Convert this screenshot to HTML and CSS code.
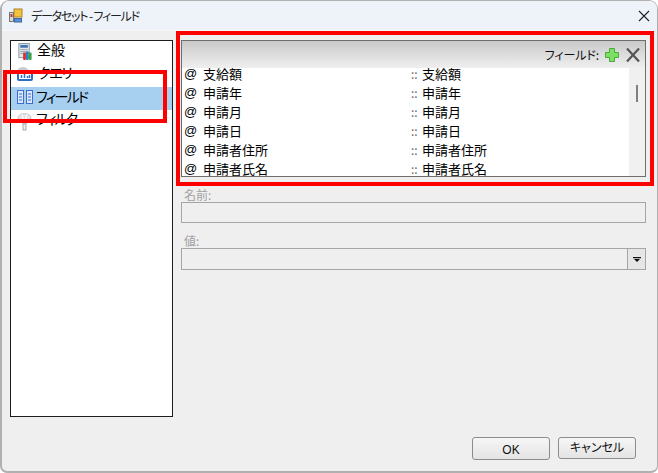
FILE: index.html
```html
<!DOCTYPE html>
<html lang="ja">
<head>
<meta charset="utf-8">
<title>データセット - フィールド</title>
<link rel="stylesheet" href="styles.css">
</head>
<body>
<div class="window">
  <header class="titlebar">
    <svg class="app-icon" width="16" height="16" viewBox="0 0 16 16">
      <rect x="6" y="1" width="8" height="8" fill="#f5c33b" stroke="#a9842a"/>
      <rect x="1.5" y="4.5" width="4" height="9" fill="#d9d9d9" stroke="#777"/>
      <rect x="2.5" y="6" width="2" height="3" fill="#c8362d"/>
      <rect x="6.5" y="10.5" width="7" height="3.500" fill="#5b8fd6" stroke="#3c66a8"/>
    </svg>
    <span class="title">データセット - フィールド</span>
    <svg class="close" width="12" height="12" viewBox="0 0 12 12"><path d="M1 1l10 10M11 1L1 11" stroke="#222" stroke-width="1.100" fill="none"/></svg>
  </header>
  <div class="content">
    <div class="main">
      <nav class="nav">
        <div class="nav-item nav-general">
          <svg width="16" height="17" viewBox="0 0 16 18">
            <rect x="1.500" y="0.500" width="11" height="15" fill="#e4e7ea" stroke="#8b97a3"/>
            <rect x="3" y="2" width="8" height="3" fill="#3f74b5"/>
            <path d="M3 7h8M3 9h8M3 11h8" stroke="#9aa5b0"/>
            <rect x="6" y="10" width="3" height="8" rx="1" fill="#d8352b"/>
            <rect x="9" y="9" width="3" height="9" rx="1" fill="#2f7fd0"/>
            <rect x="12" y="10" width="3" height="8" rx="1" fill="#3ea53a"/>
          </svg>
          <span>全般</span>
        </div>
        <div class="nav-item nav-query">
          <svg width="16" height="14" viewBox="0 0 16 14">
            <ellipse cx="6" cy="3" rx="5" ry="3" fill="#c9ccd0"/>
            <rect x="1" y="5" width="14" height="8" rx="1" fill="#fff" stroke="#2d6fc4" stroke-width="2"/>
            <path d="M4.500 11V8M7.500 11V7M10.500 11V9M12.500 11V8" stroke="#2d6fc4" stroke-width="1.500"/>
          </svg>
          <span>クエリ</span>
        </div>
        <div class="nav-item nav-selected">
          <svg width="16" height="14" viewBox="0 0 16 14">
            <rect x="0.500" y="0.500" width="6" height="13" fill="#dbe8fa" stroke="#3c6fd0"/>
            <rect x="9.500" y="0.500" width="6" height="13" fill="#dbe8fa" stroke="#3c6fd0"/>
            <path d="M2 4h3M2 7h3M2 10h3M11 4h3M11 7h3M11 10h3" stroke="#3c6fd0"/>
          </svg>
          <span>フィールド</span>
        </div>
        <div class="nav-item nav-filter">
          <svg width="15" height="18" viewBox="0 0 15 18">
            <path d="M1 5a6.500 4.500 0 0 1 13 0c0 3-4 4-5 6H6C5 9 1 8 1 5z" fill="#e3e3e3" stroke="#c4c4c4"/>
            <path d="M5 1l2 8M10 1L8 9" stroke="#fff"/>
            <rect x="6" y="11" width="3" height="6" fill="#eee" stroke="#aaa"/>
          </svg>
          <span>フィルタ</span>
        </div>
      </nav>
      <section class="side">
        <div class="fields">
          <div class="fields-head">
            <span>フィールド:</span>
            <svg class="add" width="14" height="14" viewBox="0 0 14 14"><path d="M4.500 0.500h5v4h4v5h-4v4h-5v-4h-4v-5h4z" fill="#7be05f" stroke="#4aa83d"/></svg>
            <svg class="del" width="14" height="14" viewBox="0 0 14 14"><path d="M1 0.500l12 13M13 0.500L1 13.500" stroke="#555" stroke-width="2.200" fill="none"/></svg>
          </div>
          <div class="fields-body">
            <ul class="rows">
              <li class="row"><b>@</b><span class="name">支給額</span><i>::</i><span>支給額</span></li>
              <li class="row"><b>@</b><span class="name">申請年</span><i>::</i><span>申請年</span></li>
              <li class="row"><b>@</b><span class="name">申請月</span><i>::</i><span>申請月</span></li>
              <li class="row"><b>@</b><span class="name">申請日</span><i>::</i><span>申請日</span></li>
              <li class="row"><b>@</b><span class="name">申請者住所</span><i>::</i><span>申請者住所</span></li>
              <li class="row"><b>@</b><span class="name">申請者氏名</span><i>::</i><span>申請者氏名</span></li>
            </ul>
            <div class="scrollbar"><div class="thumb"></div></div>
          </div>
        </div>
        <label class="label label-name">名前:</label>
        <div class="input"></div>
        <label class="label label-value">値:</label>
        <div class="input combo">
          <div class="combo-btn"><svg width="8" height="5" viewBox="0 0 8 5"><path d="M0 0h8v1.200H0zM1 2h6L4 5z" fill="#111"/></svg></div>
        </div>
      </section>
    </div>
    <footer class="footer">
      <button class="btn btn-ok">OK</button>
      <button class="btn btn-cancel">キャンセル</button>
    </footer>
  </div>
  <div class="mark mark-left"></div>
  <div class="mark mark-right"></div>
</div>
</body>
</html>
```
FILE: styles.css
```css
* { box-sizing: border-box; }
html, body { margin: 0; padding: 0; background: #fff; }
body {
  width: 658px;
  height: 473px;
  overflow: hidden;
  font-family: "Noto Sans CJK JP", "Liberation Sans", sans-serif;
  color: #000;
}
.window {
  position: relative;
  width: 658px;
  height: 473px;
  display: flex;
  flex-direction: column;
  background: #efefef;
  border: 1px solid #b0b0b0;
  border-left-width: 2px;
  border-bottom-width: 2px;
  border-radius: 9px 9px 7px 7px;
  overflow: hidden;
}
.titlebar {
  height: 30px;
  flex: none;
  display: flex;
  align-items: center;
  padding: 0 7px 0 6px;
  background: #eef2f9;
  border-bottom: 1px solid #f7f8fb;
}
.app-icon { flex: none; }
.title {
  margin-left: 7px;
  font-size: 12px;
  font-feature-settings: "palt";
  letter-spacing: -1.2px;
  color: #222;
  flex: 1;
}
.close { flex: none; }
.content {
  flex: 1;
  display: flex;
  flex-direction: column;
  padding: 9px 0 0 8px;
}
.main { display: flex; gap: 8px; }
.nav {
  width: 163px;
  height: 377px;
  flex: none;
  background: #fff;
  border: 1px solid #1c1c1c;
}
.nav-item {
  height: 23px;
  display: flex;
  align-items: flex-start;
  padding-left: 6px;
  font-size: 14px;
  line-height: 14px;
  font-feature-settings: "palt";
}
.nav-general { padding-top: 2px; }
.nav-general span { margin: -1px 0 0 4px; }
.nav-query { padding-top: 3px; }
.nav-query span { margin: -2px 0 0 5px; letter-spacing: -1.4px; }
.nav-selected { background: #a6cff0; padding-top: 3px; }
.nav-selected span { margin: -1px 0 0 3px; letter-spacing: -1.8px; }
.nav-filter { padding-top: 3px; }
.nav-filter span { margin: -2px 0 0 4px; letter-spacing: -1.8px; }
.side { width: 465px; flex: none; display: flex; flex-direction: column; }
.fields {
  height: 137px;
  border: 1px solid #6e6e6e;
  display: flex;
  flex-direction: column;
  background: #fff;
}
.fields-head {
  height: 27px;
  flex: none;
  display: flex;
  align-items: center;
  justify-content: flex-end;
  padding: 0 5px 0 0;
  background: linear-gradient(#c9c9c9, #efefef);
  font-size: 12px;
  font-feature-settings: "palt";
  letter-spacing: -0.1px;
  color: #111;
}
.fields-head span { margin-right: 6px; }
.del { margin-left: 7px; }
.fields-body { flex: 1; display: flex; overflow: hidden; min-height: 0; }
.rows { flex: 1; list-style: none; margin: -4px 0 0; padding: 0; overflow: hidden; }
.row {
  height: 19px;
  display: flex;
  align-items: center;
  font-size: 13px;
  line-height: 1;
}
.row b {
  width: 21px;
  padding-left: 2px;
  font-weight: normal;
  font-family: "Liberation Sans", sans-serif;
  font-size: 13px;
}
.row .name { width: 208px; }
.row i {
  width: 11px;
  font-style: normal;
  color: #666;
  font-size: 12px;
}
.scrollbar { width: 16px; flex: none; background: #f0f0f0; padding: 17px 0 0 7px; }
.thumb { width: 2px; height: 17px; background: #7f7f7f; }
.label { font-size: 12px; color: #a2a2a2; padding-left: 3px; }
.label-name { margin-top: 10px; height: 15px; line-height: 15px; }
.label-value { margin-top: 11px; height: 14px; line-height: 14px; }
.input { height: 21px; border: 1px solid #a6a6a6; background: #efefef; }
.combo { height: 22px; display: flex; justify-content: flex-end; }
.combo-btn {
  width: 18px;
  border-left: 1px solid #a6a6a6;
  background: #e6e6e6;
  display: flex;
  align-items: center;
  justify-content: center;
}
.footer {
  display: flex;
  gap: 8px;
  justify-content: flex-end;
  padding: 20px 21px 0 0;
}
.btn {
  width: 78px;
  height: 23px;
  padding: 0;
  border: 1px solid #8c8c8c;
  border-radius: 3px;
  background: linear-gradient(#f6f6f6, #e4e4e4);
  font-family: "Noto Sans CJK JP", "Liberation Sans", sans-serif;
  font-size: 12px;
  line-height: 1;
  color: #111;
}
.btn-ok { font-family: "Liberation Sans", sans-serif; padding-top: 2px; }
.btn-cancel { font-feature-settings: "palt"; height: 22px; padding-bottom: 2px; }
.mark { position: absolute; border: 4px solid #ff0000; pointer-events: none; }
.mark-left { left: 1px; top: 69px; width: 164px; height: 53px; }
.mark-right { left: 174px; top: 30px; width: 478px; height: 155px; }
```
